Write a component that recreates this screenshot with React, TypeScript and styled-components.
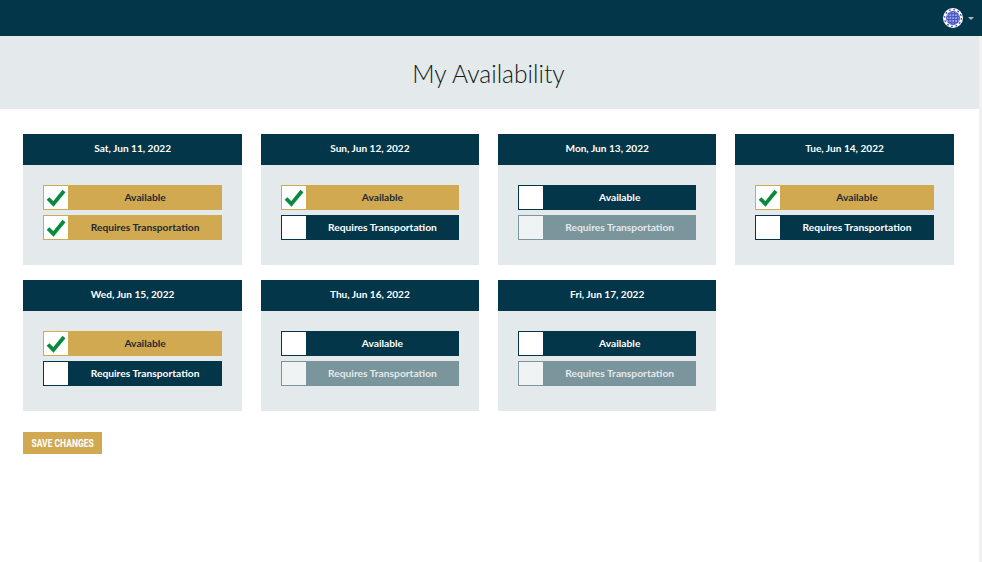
import React from 'react';
import styled, { createGlobalStyle } from 'styled-components';

interface DayData {
  date: string;
  available: boolean;
  transport: boolean;
}

const days: DayData[] = [
  { date: 'Sat, Jun 11, 2022', available: true, transport: true },
  { date: 'Sun, Jun 12, 2022', available: true, transport: false },
  { date: 'Mon, Jun 13, 2022', available: false, transport: false },
  { date: 'Tue, Jun 14, 2022', available: true, transport: false },
  { date: 'Wed, Jun 15, 2022', available: true, transport: false },
  { date: 'Thu, Jun 16, 2022', available: false, transport: false },
  { date: 'Fri, Jun 17, 2022', available: false, transport: false },
];

const Avatar = () => (
  <svg width="20" height="20" viewBox="0 0 20 20">
    <circle cx="10" cy="10" r="10" fill="#fff" />
    <circle cx="10" cy="10" r="7" fill="#4a57c6" />
    <path d="M4 7h12M4 10h12M4 13h12" stroke="#e6e8fa" strokeWidth="0.9" strokeDasharray="1.4 1.4" />
    <path d="M7 4v12M10 4v12M13 4v12" stroke="#cfd4f5" strokeWidth="0.7" strokeDasharray="1.2 1.6" />
    <circle cx="10" cy="10" r="8.4" fill="none" stroke="#4a57c6" strokeWidth="1.4" strokeDasharray="1.8 2.6" />
  </svg>
);

const Check = () => (
  <svg width="20" height="19" viewBox="0 0 20 19">
    <path d="M2 10.5l5.4 5.4L18 3" fill="none" stroke="#0b8a3f" strokeWidth="3.8" />
  </svg>
);

const Toggle = ({ label, checked, disabled }: { label: string; checked: boolean; disabled?: boolean }) => (
  <ToggleRow $checked={checked} $disabled={disabled}>
    <ToggleBox $disabled={disabled}>{checked && <Check />}</ToggleBox>
    <ToggleLabel>{label}</ToggleLabel>
  </ToggleRow>
);

export default function App() {
  return (
    <>
      <GlobalStyle />
      <TopBar>
        <Avatar />
        <Caret />
      </TopBar>
      <Body>
        <Main>
          <Banner>
            <PageTitle>My Availability</PageTitle>
          </Banner>
          <Content>
            <CardGrid>
              {days.map(day => (
                <Card key={day.date}>
                  <CardHeader>{day.date}</CardHeader>
                  <CardBody>
                    <Toggle label="Available" checked={day.available} />
                    <Toggle label="Requires Transportation" checked={day.transport} disabled={!day.available} />
                  </CardBody>
                </Card>
              ))}
            </CardGrid>
            <SaveButton>
              <SaveLabel>SAVE CHANGES</SaveLabel>
            </SaveButton>
          </Content>
        </Main>
        <ScrollTrack />
      </Body>
    </>
  );
}

const GlobalStyle = createGlobalStyle`
  html, body {
    margin: 0;
    height: 100%;
    overflow: hidden;
    background: #fff;
  }
  body {
    font-family: Lato, "Noto Sans", sans-serif;
  }
  * {
    box-sizing: border-box;
  }
`;

const TopBar = styled.header`
  align-items: center;
  background-color: #04364a;
  display: flex;
  gap: 5px;
  height: 36px;
  justify-content: flex-end;
  padding-right: 8px;
`;

const Caret = styled.span`
  border-left: 3px solid transparent;
  border-right: 3px solid transparent;
  border-top: 3px solid #a9b9bf;
`;

const Body = styled.div`
  display: flex;
  height: 526px;
`;

const Main = styled.main`
  flex: 1;
`;

const ScrollTrack = styled.div`
  background-color: #f1f1f1;
  width: 3px;
`;

const Banner = styled.div`
  background-color: #e4e9eb;
  height: 73px;
  padding: 22px 2px 0 0;
  text-align: center;
`;

const PageTitle = styled.h1`
  color: #0f1b21;
  font-size: 24.6px;
  font-weight: 300;
  line-height: 32px;
  margin: 0;
`;

const Content = styled.div`
  padding: 25px 25.3px 0 23.4px;
`;

const CardGrid = styled.div`
  display: grid;
  gap: 15px 18.9px;
  grid-template-columns: repeat(4, 1fr);
`;

const Card = styled.section`
  background-color: #e4e9eb;
`;

const CardHeader = styled.div`
  background-color: #04364a;
  color: #fff;
  font-size: 10.1px;
  font-weight: 700;
  height: 31px;
  line-height: 29px;
  text-align: center;
`;

const CardBody = styled.div`
  display: flex;
  flex-direction: column;
  gap: 5px;
  padding: 20px 20px 25px;
`;

const ToggleRow = styled.div<{ $checked: boolean; $disabled?: boolean }>`
  align-items: center;
  background-color: ${p => (p.$checked ? '#d1a951' : p.$disabled ? '#7a959c' : '#04364a')};
  color: ${p => (p.$checked ? '#1f2a30' : p.$disabled ? '#e4e9eb' : '#fff')};
  display: flex;
  height: 25px;
  padding-left: 1px;
`;

const ToggleBox = styled.span<{ $disabled?: boolean }>`
  align-items: center;
  background-color: ${p => (p.$disabled ? '#f0f3f4' : '#fff')};
  display: flex;
  flex: none;
  height: 23px;
  justify-content: center;
  width: 24px;
`;

const ToggleLabel = styled.span`
  flex: 1;
  font-size: 10.25px;
  font-weight: 700;
  line-height: 23px;
  text-align: center;
`;

const SaveButton = styled.button`
  background-color: #d1a951;
  border: 0;
  color: #fff;
  display: block;
  font-family: Roboto, sans-serif;
  font-size: 10px;
  font-weight: 700;
  height: 22px;
  margin-top: 21px;
  padding: 0;
  width: 79px;
`;

const SaveLabel = styled.span`
  display: inline-block;
  transform: scaleX(0.85);
  white-space: nowrap;
`;
